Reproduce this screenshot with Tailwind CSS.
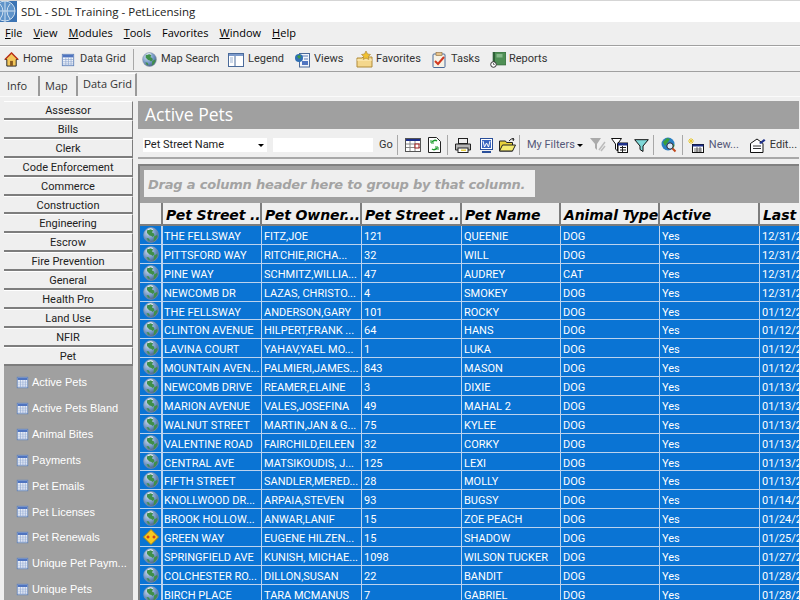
<!DOCTYPE html>
<html lang="en">
<head>
<meta charset="UTF-8">
<title>PetLicensing</title>
<script src="https://cdn.jsdelivr.net/npm/@tailwindcss/browser@4"></script>
</head>
<body class="w-[800px] h-[600px] overflow-hidden bg-[#efefef] font-['Roboto',sans-serif] text-[11px] text-black">

<svg class="absolute w-0 h-0">
  <defs>
    <radialGradient id="gl" cx="35%" cy="30%" r="75%"><stop offset="0" stop-color="#d3e1f2"/><stop offset="0.6" stop-color="#7397c6"/><stop offset="1" stop-color="#465f86"/></radialGradient>
    <symbol id="globe" viewBox="0 0 16 16">
      <circle cx="8" cy="8" r="7.400" fill="url(#gl)" stroke="#8d99a6" stroke-width=".6"/>
      <path d="M4 3.500l3-1.500 3 1-1 2.500 2 1 .5 2-2 1.500-1-1-2-.5-2.500-2.500zM11 9.500l3-1.500.5 1.500-2 3.500-2 1.500zM3.500 11l2.500.5 1 2.500-2-.5z" fill="#3f8f4a"/>
      <path d="M5 2.500q3-1.500 5 0" stroke="#e8eff8" fill="none"/>
    </symbol>
    <symbol id="grid" viewBox="0 0 16 16">
      <rect x="1.500" y="1.500" width="13" height="13" fill="#f4f7fc" stroke="#5e80b8"/>
      <rect x="2" y="2" width="12" height="3" fill="#4f74c0"/>
      <path d="M2 7.500h12M2 10h12M2 12.500h12M5.500 5v9M8.500 5v9M11.500 5v9" stroke="#8ea6d0" stroke-width=".8"/>
    </symbol>
  </defs>
</svg>

<!-- title bar -->
<div class="h-[22px] bg-white border-t border-[#d5d5d5] flex items-center">
  <svg class="w-[17px] h-[21px] shrink-0" viewBox="0 0 17 21"><rect width="17" height="21" fill="#3c74b4"/><circle cx="5" cy="10" r="10" fill="#5f93c9" stroke="#cfe0f0"/><path d="M5 0v21M-5 10h20M0 3q6 7 0 15M10 3q-6 7 0 15" stroke="#cfe0f0" fill="none"/></svg>
  <span class="ml-[4px] text-[11.5px] font-['Open_Sans',sans-serif] text-[#222]">SDL - SDL Training - PetLicensing</span>
</div>

<!-- menu bar -->
<div class="h-[24px] border-b border-[#a0a0a0] flex items-center pl-[5px] gap-[11px] text-[11px] font-['Open_Sans',sans-serif]">
  <span><u>F</u>ile</span><span><u>V</u>iew</span><span><u>M</u>odules</span><span><u>T</u>ools</span><span>Favorites</span><span><u>W</u>indow</span><span><u>H</u>elp</span>
</div>

<!-- main toolbar -->
<div class="h-[26px] pt-[1px] border-t border-t-white border-b border-b-[#a0a0a0] flex items-center pl-[4px] text-[#333] whitespace-nowrap">
  <svg class="w-[15px] h-[15px] mr-[4px]" viewBox="0 0 16 16"><path d="M8 1L1 8h2v7h10V8h2z" fill="#f3c75a" stroke="#222"/><rect x="6.500" y="9.500" width="3" height="5.500" fill="#8a5a20"/><path d="M1 8l7-7 7 7" fill="none" stroke="#c23a20" stroke-width="1.500"/></svg>
  <span class="w-[38px]">Home</span>
  <svg class="w-[14px] h-[14px] mr-[5px]"><use href="#grid"/></svg>
  <span class="w-[46px]">Data Grid</span>
  <div class="w-px h-[21px] bg-[#a8a8a8] ml-[7px] mr-[8px]"></div>
  <svg class="w-[15px] h-[15px] mr-[4px]"><use href="#globe"/></svg>
  <span class="w-[67px]">Map Search</span>
  <svg class="w-[16px] h-[14px] mr-[4px]" viewBox="0 0 16 14"><rect x=".5" y=".5" width="15" height="13" fill="#fff" stroke="#4a6a9a"/><rect x="1" y="1" width="14" height="2" fill="#7d9bcc"/><path d="M7 3v10" stroke="#4a6a9a"/><path d="M2 5h3M2 7h3M2 9h3" stroke="#9db3d4"/></svg>
  <span class="w-[46px]">Legend</span>
  <svg class="w-[17px] h-[16px] mr-[3px]" viewBox="0 0 17 16"><rect x="5.500" y="1.500" width="10" height="13.500" fill="#f2f5fb" stroke="#4a6a9a"/><path d="M7 4h7M10 7h4" stroke="#5d7fb8"/><rect x="8" y="9" width="6" height="4" fill="#4f74c0"/><circle cx="5" cy="6" r="4" fill="#2f6fb4"/><path d="M3 4l3-1 1 2-2 2z" fill="#3f9a3c"/></svg>
  <span class="w-[42px]">Views</span>
  <svg class="w-[17px] h-[17px] mr-[3px]" viewBox="0 0 17 17"><path d="M1 7h5l1-1h9v10H1z" fill="#f4d78c" stroke="#b08b3a"/><path d="M1 9h15" stroke="#fff2c4"/><path d="M10 0l1.500 3 3 .5-2.200 2 .5 3L10 7l-2.800 1.500.5-3-2.200-2 3-.5z" fill="#f1c232" stroke="#b08b3a" stroke-width=".7"/></svg>
  <span class="w-[56px]">Favorites</span>
  <svg class="w-[14px] h-[16px] mr-[5px]" viewBox="0 0 14 16"><rect x="1" y="2" width="12" height="13.500" rx="1" fill="#f6f2e6" stroke="#4a6a9a"/><rect x="4" y=".5" width="6" height="3" fill="#e6c28b" stroke="#8a6a3a" stroke-width=".6"/><path d="M3 9l3 3 6-7" fill="none" stroke="#d1371f" stroke-width="2"/></svg>
  <span class="w-[39px]">Tasks</span>
  <svg class="w-[16px] h-[16px] mr-[3px]" viewBox="0 0 16 16"><rect x="3" y="0" width="13" height="13" fill="#4f8f55" stroke="#2f5f38" stroke-width=".6"/><rect x="6.500" y="2" width="6" height="3.500" fill="#86b88a"/><rect x="3" y="0" width="2" height="13" fill="#2f6038"/><circle cx="3.500" cy="12.500" r="2.800" fill="#fff" stroke="#333"/><path d="M3.500 11v1.500h1.200" stroke="#333" fill="none" stroke-width=".7"/></svg>
  <span>Reports</span>
</div>

<!-- tabs -->
<div class="h-[25px] flex items-end pl-[2px] border-b border-[#fafafa] text-[11px] font-['Open_Sans',sans-serif] text-[#333] whitespace-nowrap">
  <div class="w-[38px] h-[20px] border-r-2 border-[#9a9a9a] pl-[5px] pt-[1px] leading-[18px]">Info</div>
  <div class="w-[38px] h-[20px] border-r-2 border-[#9a9a9a] pl-[5px] pt-[1px] leading-[18px]">Map</div>
  <div class="w-[59px] h-[23px] border-t border-r-2 border-t-white border-r-[#9a9a9a] bg-[#efefef] pl-[5px] leading-[20px]">Data Grid</div>
</div>

<div class="flex h-[503px]">
  <!-- sidebar -->
  <div class="w-[133px] pl-[4px] pt-[4px] shrink-0 flex flex-col">
    <div id="modules" class="flex flex-col"></div>
    <div id="views" class="flex-1 bg-[#a0a0a0] pt-[4px] overflow-hidden text-white font-['Liberation_Sans',sans-serif]"></div>
  </div>
  <div class="w-[5px] shrink-0"></div>

  <!-- content -->
  <div class="w-[661px] pt-[4px] overflow-hidden">
    <div class="h-[28px] bg-[#a0a0a0] text-white text-[17.5px] pl-[7px] leading-[27px] font-['Open_Sans',sans-serif]">Active Pets</div>

    <div class="h-[24px] mt-[4px] flex items-center text-[#333] pl-[5px] whitespace-nowrap">
      <div class="w-[124px] h-[14px] bg-white flex items-center justify-between pl-[1px] pr-[3px] text-[#222]">
        <span>Pet Street Name</span><span class="w-0 h-0 border-x-[3px] border-x-transparent border-t-[3px] border-t-black"></span>
      </div>
      <div class="w-[100px] h-[14px] bg-white ml-[6px]"></div>
      <span class="ml-[6px] w-[14px]">Go</span>
      <div class="w-px h-[20px] bg-[#a8a8a8] ml-[4px] mr-[7px]"></div>
      <svg class="w-[16px] h-[14px] mr-[7px]" viewBox="0 0 16 14"><rect x=".5" y=".5" width="15" height="13" fill="#fff" stroke="#555"/><rect x="1" y="1" width="14" height="2" fill="#1c2f8a"/><path d="M1 6h14M1 9.500h14M5 3v10M10 3v10" stroke="#888"/><rect x="10" y="6" width="4" height="4" fill="#fff" stroke="#a01818"/></svg>
      <svg class="w-[13px] h-[16px]" viewBox="0 0 13 16"><path d="M.5.5h8l4 4v11H.5z" fill="#fff" stroke="#222"/><path d="M9 4a3.500 3.500 0 0 0-5 1M4 12a3.500 3.500 0 0 0 5-1" stroke="#1a9a2a" stroke-width="1.500" fill="none"/><path d="M3 3v3h3M10 13v-3H7" stroke="#1a9a2a" fill="none"/></svg>
      <div class="w-px h-[20px] bg-[#a8a8a8] ml-[6px] mr-[7px]"></div>
      <svg class="w-[16px] h-[15px] mr-[8px]" viewBox="0 0 16 15"><rect x="3.500" y=".5" width="9" height="5" fill="#eee" stroke="#222"/><path d="M.5 6h15v6h-15z" fill="#b5b5b5" stroke="#222"/><rect x="3" y="10" width="10" height="4.500" fill="#fff" stroke="#222"/><rect x="6" y="11.500" width="5" height="1.500" fill="#e8d040"/></svg>
      <svg class="w-[15px] h-[15px] mr-[5px]" viewBox="0 0 15 15"><rect x="1.500" y=".5" width="12" height="11" fill="#fff" stroke="#2a4f9a"/><rect x="3" y="2" width="9" height="8" fill="#3a66c0"/><path d="M4 3l1.500 6 2-4 2 4L11 3" stroke="#fff" fill="none"/><path d="M3 14h9" stroke="#2a4f9a" stroke-width="2"/></svg>
      <svg class="w-[17px] h-[14px]" viewBox="0 0 17 14"><path d="M.5 3h6l1 1.500h6v8.500h-13z" fill="#e8d23a" stroke="#222"/><path d="M.5 13l3-6h13l-3 6z" fill="#f5ec70" stroke="#222"/><path d="M10 3q2-3 5-2M13 0l2 1-1 2" stroke="#222" fill="none"/></svg>
      <div class="w-px h-[20px] bg-[#a8a8a8] ml-[3px] mr-[7px]"></div>
      <span class="text-[#555878] mr-[2px]">My Filters</span><span class="w-0 h-0 border-x-[3px] border-x-transparent border-t-[3px] border-t-black mr-[7px]"></span>
      <svg class="w-[16px] h-[14px] mr-[5px]" viewBox="0 0 16 14"><path d="M0 0h11L7 6v6L5 10V6z" fill="#aaa"/><path d="M9 12l6-8M11 13l4-5" stroke="#bbb" stroke-width="1.500"/></svg>
      <svg class="w-[17px] h-[15px] mr-[6px]" viewBox="0 0 17 15"><path d="M.5.500h10L6.500 6v7L4.500 11V6z" fill="#fff" stroke="#111"/><rect x="7" y="5" width="9.500" height="9.500" fill="#fff" stroke="#111"/><rect x="7" y="5" width="9.500" height="2.500" fill="#1c2f8a"/><path d="M9 9.500h6M9 12h6M11.500 8v6" stroke="#222"/></svg>
      <svg class="w-[15px] h-[13px]" viewBox="0 0 15 13"><path d="M.7.700h13.600L9 7v5.500l-3-2V7z" fill="#7fd8d8" stroke="#111"/></svg>
      <div class="w-px h-[20px] bg-[#a8a8a8] ml-[4px] mr-[7px]"></div>
      <svg class="w-[16px] h-[16px]" viewBox="0 0 16 16"><circle cx="7" cy="7" r="6.500" fill="#2a7fc4"/><path d="M2 5l4-4 3 1-2 3-3 4zM10 9l3-2 .5 2-2 3z" fill="#3aa03a"/><circle cx="9" cy="9" r="3.200" fill="#d6e8f8" stroke="#223"/><path d="M11.500 11.500l3 3" stroke="#c2481c" stroke-width="2"/></svg>
      <div class="w-px h-[20px] bg-[#a8a8a8] ml-[5px] mr-[5px]"></div>
      <svg class="w-[16px] h-[15px] mr-[5px]" viewBox="0 0 16 15"><rect x="4.500" y="6.500" width="11" height="8" fill="#fff" stroke="#111"/><rect x="4.500" y="6.500" width="11" height="2" fill="#1c2f8a"/><path d="M6 11h8M6 13h8M9 9v5M12 9v5" stroke="#333" stroke-width=".7"/><path d="M3 0v6M0 3h6M1 1l4 4M5 1L1 5" stroke="#e8c830"/></svg>
      <span class="text-[#555878] w-[32px]">New...</span>
      <div class="w-[9px] shrink-0"></div>
      <svg class="w-[16px] h-[15px] mr-[4px]" viewBox="0 0 16 15"><path d="M.5 5.500L7 1l6 4.500v9H.5z" fill="#fff" stroke="#111"/><path d="M3 8h8M3 10.500h8" stroke="#333"/><path d="M9 5l5-4 1.500 1.500L11 6z" fill="#1c2f8a"/></svg>
      <span>Edit...</span>
    </div>

    <div class="h-[2px] bg-[#a8a8a8]"></div>
    <div class="h-[5px]"></div>

    <!-- grid -->
    <div class="bg-[#a0a0a0] h-[500px] border-t-2 border-l-2 border-[#808080] pt-[4px]">
      <div class="ml-[4px] w-[391px] h-[27px] bg-[#efefef] pl-[4px] text-[13px] leading-[29px] font-bold italic text-[#a3a3a3] font-['DejaVu_Sans',sans-serif] tracking-[-0.2px] whitespace-nowrap">Drag a column header here to group by that column.</div>
      <div class="mt-[6px] overflow-hidden">
        <div id="head" class="flex h-[23px] w-[700px]"></div>
        <div id="rows" class="w-[700px]"></div>
      </div>
    </div>
  </div>
</div>

<script>
  const modules = ['Assessor','Bills','Clerk','Code Enforcement','Commerce','Construction','Engineering','Escrow','Fire Prevention','General','Health Pro','Land Use','NFIR','Pet'];
  document.getElementById('modules').innerHTML = modules.map(m =>
    `<div class="h-[18.92px] shrink-0 bg-[#efefef] border-t border-t-white border-b-2 border-b-[#7d7d7d] border-r border-r-[#7d7d7d] text-center leading-[18px] text-[#222]">${m}</div>`).join('');

  const views = ['Active Pets','Active Pets Bland','Animal Bites','Payments','Pet Emails','Pet Licenses','Pet Renewals','Unique Pet Paym...','Unique Pets'];
  document.getElementById('views').innerHTML = views.map(v =>
    `<div class="h-[25.85px] flex items-center pl-[12px] gap-[3px]"><svg class="w-[13px] h-[13px] shrink-0"><use href="#grid"/></svg><span class="whitespace-nowrap">${v}</span></div>`).join('');

  const widths = ['w-[99px]','w-[100px]','w-[100px]','w-[99px]','w-[99px]','w-[100px]','w-[60px]'];
  const heads = ['Pet Street ...','Pet Owner...','Pet Street ...','Pet Name','Animal Type','Active','Last'];
  document.getElementById('head').innerHTML =
    `<div class="w-[23px] shrink-0 bg-[#efefef] border-r-2 border-[#7d7d7d] border-b-2"></div>` +
    heads.map((h,i) => `<div class="${widths[i]} shrink-0 bg-[#efefef] border-r-2 border-b-2 border-[#7d7d7d] pl-[3px] text-[14px] leading-[24px] font-bold italic font-['DejaVu_Sans',sans-serif] whitespace-nowrap overflow-hidden tracking-[-0.1px]">${h}</div>`).join('');

  const data = [
    ['THE FELLSWAY','FITZ,JOE','121','QUEENIE','DOG','Yes','12/31/2'],
    ['PITTSFORD WAY','RITCHIE,RICHA...','32','WILL','DOG','Yes','12/31/2'],
    ['PINE WAY','SCHMITZ,WILLIA...','47','AUDREY','CAT','Yes','12/31/2'],
    ['NEWCOMB DR','LAZAS, CHRISTO...','4','SMOKEY','DOG','Yes','12/31/2'],
    ['THE FELLSWAY','ANDERSON,GARY','101','ROCKY','DOG','Yes','01/12/2'],
    ['CLINTON AVENUE','HILPERT,FRANK ...','64','HANS','DOG','Yes','01/12/2'],
    ['LAVINA COURT','YAHAV,YAEL MO...','1','LUKA','DOG','Yes','01/12/2'],
    ['MOUNTAIN AVEN...','PALMIERI,JAMES...','843','MASON','DOG','Yes','01/12/2'],
    ['NEWCOMB DRIVE','REAMER,ELAINE','3','DIXIE','DOG','Yes','01/13/2'],
    ['MARION AVENUE','VALES,JOSEFINA','49','MAHAL 2','DOG','Yes','01/13/2'],
    ['WALNUT STREET','MARTIN,JAN & G...','75','KYLEE','DOG','Yes','01/13/2'],
    ['VALENTINE ROAD','FAIRCHILD,EILEEN','32','CORKY','DOG','Yes','01/13/2'],
    ['CENTRAL AVE','MATSIKOUDIS, J...','125','LEXI','DOG','Yes','01/13/2'],
    ['FIFTH STREET','SANDLER,MERED...','28','MOLLY','DOG','Yes','01/13/2'],
    ['KNOLLWOOD DR...','ARPAIA,STEVEN','93','BUGSY','DOG','Yes','01/14/2'],
    ['BROOK HOLLOW...','ANWAR,LANIF','15','ZOE PEACH','DOG','Yes','01/24/2'],
    ['GREEN WAY','EUGENE HILZEN...','15','SHADOW','DOG','Yes','01/25/2'],
    ['SPRINGFIELD AVE','KUNISH, MICHAE...','1098','WILSON TUCKER','DOG','Yes','01/27/2'],
    ['COLCHESTER RO...','DILLON,SUSAN','22','BANDIT','DOG','Yes','01/28/2'],
    ['BIRCH PLACE','TARA MCMANUS','7','GABRIEL','DOG','Yes','01/28/2']
  ];
  const warn = `<svg class="w-[16px] h-[16px]" viewBox="0 0 16 16"><path d="M8 .5L15.500 8 8 15.500.5 8z" fill="#f6c820" stroke="#b08a10" stroke-linejoin="round"/><path d="M3.500 8h3M5 6.500v3M9.500 8h3M11 6.500v3" stroke="#c01818"/></svg>`;
  const globe = `<svg class="w-[16px] h-[16px]"><use href="#globe"/></svg>`;
  document.getElementById('rows').innerHTML = data.map((r,n) =>
    `<div class="flex h-[18.88px] bg-[#0a74d4] border-b border-[#bcd3ee] text-white">` +
    `<div class="w-[23px] shrink-0 border-r-2 border-[#bcd3ee] flex items-center justify-center">${n === 16 ? warn : globe}</div>` +
    r.map((c,i) => `<div class="${widths[i]} shrink-0 border-r border-[#bcd3ee] ${i === 0 ? 'pl-px' : 'pl-[2px]'} leading-[22px] whitespace-nowrap overflow-hidden">${c}</div>`).join('') +
    `</div>`).join('');
</script>
</body>
</html>
